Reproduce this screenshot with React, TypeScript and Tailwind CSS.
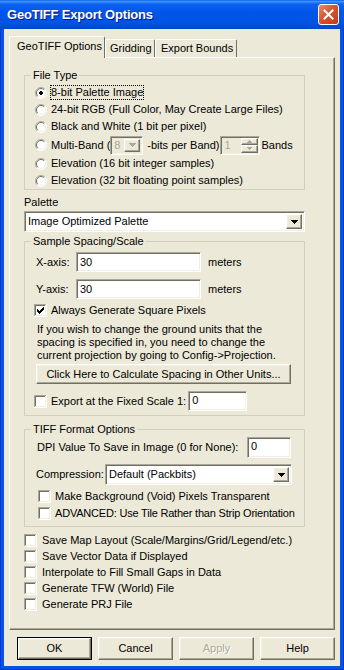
import type { ReactNode } from 'react';

const raised =
  'bg-[#ECE9D8] border border-t-white border-l-white border-r-[#716F64] border-b-[#716F64] shadow-[inset_-1px_-1px_0_#ACA899,inset_1px_1px_0_#F1EFE2]';
const sunken =
  'border border-t-[#ACA899] border-l-[#ACA899] border-r-white border-b-white shadow-[inset_1px_1px_0_#716F64,inset_-1px_-1px_0_#F1EFE2]';

function Arrow({ color = '#000' }: { color?: string }) {
  return (
    <svg width="7" height="4" viewBox="0 0 7 4" aria-hidden>
      <path fill={color} d="M0 0h7v1H0z M1 1h5v1H1z M2 2h3v1H2z M3 3h1v1H3z" />
    </svg>
  );
}

function Check({ on = false }: { on?: boolean }) {
  return (
    <svg width="13" height="13" viewBox="0 0 13 13" className="shrink-0" aria-hidden>
      <rect width="13" height="13" fill="#fff" />
      <path fill="#ACA899" d="M0 0h12v1H0z M0 0h1v12H0z" />
      <path fill="#716F64" d="M1 1h10v1H1z M1 1h1v10H1z" />
      <path fill="#F1EFE2" d="M1 11h11v1H1z M11 1h1v11h-1z" />
      {on && (
        <path
          fill="#000"
          d="M9 3h1v1h-1z M8 4h2v1h-2z M3 5h1v1h-1z M7 5h3v1h-3z M3 6h2v1h-2z M6 6h3v1h-3z M3 7h5v1h-5z M4 8h3v1h-3z M5 9h1v1h-1z"
        />
      )}
    </svg>
  );
}

function Radio({ on = false }: { on?: boolean }) {
  return (
    <svg width="12" height="12" viewBox="0 0 12 12" className="shrink-0" aria-hidden>
      <circle cx="6" cy="6" r="5.5" fill="#fff" />
      <path d="M2.1 9.9 A5.5 5.5 0 0 1 9.9 2.1" fill="none" stroke="#ACA899" strokeWidth="1" />
      <path d="M2.8 9.2 A4.5 4.5 0 0 1 9.2 2.8" fill="none" stroke="#716F64" strokeWidth="1" />
      <path d="M9.9 2.1 A5.5 5.5 0 0 1 2.1 9.9" fill="none" stroke="#fff" strokeWidth="1" />
      <path d="M9.2 2.8 A4.5 4.5 0 0 1 2.8 9.2" fill="none" stroke="#F1EFE2" strokeWidth="1" />
      {on && <path fill="#000" d="M5 4h2v4H5z M4 5h4v2H4z" />}
    </svg>
  );
}

function Combo({ value, w, h = 21, disabled = false }: { value: string; w: number; h?: number; disabled?: boolean }) {
  return (
    <div
      className={`${sunken} ${disabled ? 'bg-[#ECE9D8] text-[#ACA899]' : 'bg-white'} flex items-center pl-[3px] pr-[2px]`}
      style={{ width: w, height: h }}
    >
      <span className="flex-1 truncate">{value}</span>
      <div className={`${raised} w-[16px] h-[calc(100%-4px)] flex items-center justify-center`}>
        <Arrow color={disabled ? '#ACA899' : '#000'} />
      </div>
    </div>
  );
}

function Field({ value, w, h = 20, top = false }: { value: string; w: number; h?: number; top?: boolean }) {
  return (
    <div
      className={`${sunken} bg-white flex pl-[3px] ${top ? 'items-start pt-[2px]' : 'items-center'}`}
      style={{ width: w, height: h }}
    >
      {value}
    </div>
  );
}

function Group({ title, className, children }: { title: string; className: string; children: ReactNode }) {
  return (
    <fieldset className={`border border-[#D0D0BF] w-[281px] ${className}`}>
      <legend className="ml-[6px] px-[2px] leading-[13px]">{title}</legend>
      {children}
    </fieldset>
  );
}

export default function App() {
  return (
    <div className="w-[344px] h-[670px] bg-[#0055E5] border-x border-b border-[#0831D9] flex flex-col whitespace-nowrap font-['Liberation_Sans',Arial,sans-serif] text-[11px] leading-[13px] text-black">
      {/* Title bar */}
      <div className="h-[29px] -mx-px shrink-0 flex items-center pl-[7px] pr-[5px] bg-[linear-gradient(to_bottom,#0A5FE8_0%,#3D95FF_5%,#0C61F0_14%,#0055E8_45%,#0054E3_80%,#0046CE_100%)]">
        <span className="flex-1 text-white font-bold text-[13px] tracking-[-0.2px] [text-shadow:1px_1px_0_#0A1883]">
          GeoTIFF Export Options
        </span>
        <div className="w-[21px] h-[21px] rounded-[3px] border border-white bg-[linear-gradient(135deg,#EA8B6E_0%,#D9552F_45%,#C23A14_100%)] flex items-center justify-center">
          <svg width="11" height="11" viewBox="0 0 11 11" aria-hidden>
            <path d="M1.5 1.5 L9.5 9.5 M9.5 1.5 L1.5 9.5" stroke="#fff" strokeWidth="2" strokeLinecap="square" />
          </svg>
        </div>
      </div>

      {/* Client */}
      <div className="flex-1 mx-[3px] mb-[3px] bg-[#ECE9D8] flex flex-col">
        {/* Tabs */}
        <div className="mt-[7px] pl-[5px] flex items-end -mb-px relative z-10">
          <div className="w-[96px] h-[22px] bg-[#ECE9D8] border-l border-t border-white border-r border-r-[#716F64] rounded-t-[2px] pl-[7px] pt-[3px]">
            GeoTIFF Options
          </div>
          <div className="w-[50px] h-[18px] mb-px border-l border-t border-white border-r border-r-[#716F64] rounded-t-[2px] pl-[4px] pt-[2px]">
            Gridding
          </div>
          <div className="w-[82px] h-[18px] mb-px border-l border-t border-white border-r border-r-[#716F64] rounded-t-[2px] pl-[5px] pt-[2px]">
            Export Bounds
          </div>
        </div>

        {/* Panel */}
        <div className="ml-[5px] w-[326px] h-[573px] border-l border-t border-white border-r border-b border-r-[#716F64] border-b-[#716F64] shadow-[inset_-1px_-1px_0_#ACA899] pl-[14px] flex flex-col">
          <Group title="File Type" className="mt-[11px] pt-[2px]">
            <div className="pl-[10px] flex flex-col">
              <div className="h-[17px] flex items-center gap-[3px]">
                <Radio on />
                <span className="border border-dotted border-black leading-[13px]">8-bit Palette Image</span>
              </div>
              <div className="h-[17px] flex items-center gap-[4px]">
                <Radio />
                <span>24-bit RGB (Full Color, May Create Large Files)</span>
              </div>
              <div className="h-[17px] flex items-center gap-[4px]">
                <Radio />
                <span>Black and White (1 bit per pixel)</span>
              </div>
              <div className="h-[20px] flex items-center gap-[4px]">
                <Radio />
                <span>Multi-Band (</span>
                <div className="-ml-[4px]">
                  <Combo value="8" w={33} h={19} disabled />
                </div>
                <span className="ml-0">-bits per Band)</span>
                <div className={`${sunken} bg-[#ECE9D8] text-[#ACA899] w-[40px] h-[19px] flex items-center pl-[3px] pr-[1px] -ml-[3px]`}>
                  <span className="flex-1">1</span>
                  <div className="w-[17px] h-[15px] flex flex-col">
                    <div className={`${raised} flex-1 flex items-center justify-center`}>
                      <svg width="5" height="3" viewBox="0 0 5 3" aria-hidden>
                        <path fill="#ACA899" d="M2 0h1v1H2z M1 1h3v1H1z M0 2h5v1H0z" />
                      </svg>
                    </div>
                    <div className={`${raised} flex-1 flex items-center justify-center`}>
                      <svg width="5" height="3" viewBox="0 0 5 3" aria-hidden>
                        <path fill="#ACA899" d="M0 0h5v1H0z M1 1h3v1H1z M2 2h1v1H2z" />
                      </svg>
                    </div>
                  </div>
                </div>
                <span className="-ml-[3px]">Bands</span>
              </div>
              <div className="h-[17px] flex items-center gap-[4px]">
                <Radio />
                <span>Elevation (16 bit integer samples)</span>
              </div>
              <div className="h-[17px] flex items-center gap-[4px]">
                <Radio />
                <span>Elevation (32 bit floating point samples)</span>
              </div>
            </div>
          </Group>

          <div className="mt-[6px] h-[13px]">Palette</div>
          <div className="mt-[2px]">
            <Combo value="Image Optimized Palette" w={281} />
          </div>

          <Group title="Sample Spacing/Scale" className="mt-[3px] pt-[4px] pb-[4px]">
            <div className="pl-[11px] flex flex-col">
              <div className="h-[20px] flex items-center">
                <span className="w-[40px]">X-axis:</span>
                <Field value="30" w={125} />
                <span className="ml-[7px]">meters</span>
              </div>
              <div className="mt-[7px] h-[20px] flex items-center">
                <span className="w-[40px]">Y-axis:</span>
                <Field value="30" w={125} />
                <span className="ml-[7px]">meters</span>
              </div>
              <div className="mt-[4px] h-[14px] -ml-[2px] flex items-center gap-[4px]">
                <Check on />
                <span>Always Generate Square Pixels</span>
              </div>
              <p className="mt-[6px] pl-[1px] leading-[13px]">
                If you wish to change the ground units that the
                <br />
                spacing is specified in, you need to change the
                <br />
                current projection by going to Config-&gt;Projection.
              </p>
              <div className={`${raised} mt-[2px] w-[255px] h-[20px] flex items-center justify-center`}>
                Click Here to Calculate Spacing in Other Units...
              </div>
              <div className="mt-[7px] h-[20px] -ml-[2px] flex items-center gap-[4px]">
                <Check />
                <span>Export at the Fixed Scale 1:</span>
                <div className="-ml-[2px]">
                  <Field value="0" w={59} top />
                </div>
              </div>
            </div>
          </Group>

          <Group title="TIFF Format Options" className="mt-[7px] pt-[1px] pb-[4px]">
            <div className="pl-[12px] flex flex-col">
              <div className="h-[21px] flex items-center">
                <span className="w-[210px]">DPI Value To Save in Image (0 for None):</span>
                <Field value="0" w={44} h={21} top />
              </div>
              <div className="mt-[6px] h-[21px] -ml-[1px] flex items-center">
                <span className="w-[69px]">Compression:</span>
                <Combo value="Default (Packbits)" w={187} />
              </div>
              <div className="mt-[3px] h-[17px] ml-[1px] flex items-center gap-[4px]">
                <Check />
                <span>Make Background (Void) Pixels Transparent</span>
              </div>
              <div className="h-[17px] ml-[1px] flex items-center gap-[4px]">
                <Check />
                <span className="tracking-[-0.2px]">ADVANCED: Use Tile Rather than Strip Orientation</span>
              </div>
            </div>
          </Group>

          <div className="mt-[5px] flex flex-col">
            {[
              'Save Map Layout (Scale/Margins/Grid/Legend/etc.)',
              'Save Vector Data if Displayed',
              'Interpolate to Fill Small Gaps in Data',
              'Generate TFW (World) File',
              'Generate PRJ File',
            ].map((label) => (
              <div key={label} className="h-[16px] flex items-center gap-[5px]">
                <Check />
                <span>{label}</span>
              </div>
            ))}
          </div>
        </div>

        {/* Buttons */}
        <div className="mt-[7px] pl-[13px] flex gap-[6px]">
          <div className="w-[75px] h-[23px] border border-black">
            <div className={`${raised} w-full h-full flex items-center justify-center`}>OK</div>
          </div>
          <div className={`${raised} w-[75px] h-[23px] flex items-center justify-center`}>Cancel</div>
          <div className={`${raised} w-[75px] h-[23px] flex items-center justify-center text-[#ACA899] [text-shadow:1px_1px_0_#fff]`}>
            Apply
          </div>
          <div className={`${raised} w-[75px] h-[23px] flex items-center justify-center`}>Help</div>
        </div>
      </div>
    </div>
  );
}
